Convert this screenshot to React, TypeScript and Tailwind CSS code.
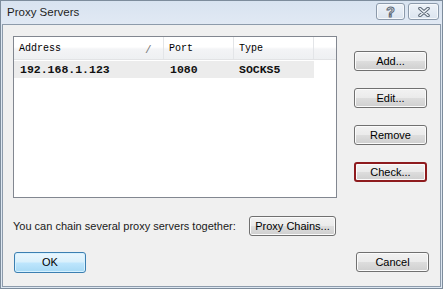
import React from 'react';

const sans = { fontFamily: '"Liberation Sans", Arial, sans-serif' };

function WinButton({ label, className = '' }: { label: string; className?: string }) {
  return (
    <button
      className={`h-[20px] w-[73px] rounded-[3px] border border-[#707070] bg-[linear-gradient(to_bottom,#f2f2f2_0%,#ebebeb_48%,#dddddd_52%,#cfcfcf_100%)] shadow-[inset_0_0_0_1px_#fbfbfb] text-[11px] text-black leading-none flex items-center justify-center ${className}`}
    >
      {label}
    </button>
  );
}

export default function App() {
  return (
    <div
      className="w-[443px] h-[289px] overflow-hidden bg-[#dde7f2] border border-[#7d8c9c] flex flex-col"
      style={sans}
    >
      {/* Title bar */}
      <div className="h-[23px] shrink-0 flex items-start bg-[linear-gradient(to_bottom,#d8e3f0,#e1e9f4)]">
        <span className="ml-[6px] mt-[6px] text-[11.5px] text-[#1e1e1e] leading-none">Proxy Servers</span>
        <div className="ml-auto mr-[3px] mt-[2px] flex gap-[3px]">
          <div className="w-[29px] h-[17px] rounded-[3px] border border-[#8c9aab] bg-[linear-gradient(to_bottom,#edf2f8,#dbe4ef)] shadow-[inset_0_0_0_1px_#f5f8fb] flex items-center justify-center">
            <span className="text-[14px] font-bold leading-none text-[#f3f5f8] [-webkit-text-stroke:1px_#5c6876]">?</span>
          </div>
          <div className="w-[31px] h-[17px] rounded-[3px] border border-[#8c9aab] bg-[linear-gradient(to_bottom,#edf2f8,#dbe4ef)] shadow-[inset_0_0_0_1px_#f5f8fb] flex items-center justify-center">
            <svg width="14" height="10" viewBox="0 0 14 10">
              <path d="M3 1.5 L11 8.5 M11 1.5 L3 8.5" stroke="#5c6876" strokeWidth="3.6" strokeLinecap="round" />
              <path d="M3 1.5 L11 8.5 M11 1.5 L3 8.5" stroke="#eef2f7" strokeWidth="1.6" strokeLinecap="round" />
            </svg>
          </div>
        </div>
      </div>

      {/* Client area */}
      <div className="flex-1 mx-[1px] mb-[1px] bg-[#f0f0f0] border border-[#8d9bab] pt-[11px] pl-[10px] pr-[11px] flex flex-col">
        <div className="flex">
          {/* List view */}
          <div className="w-[324px] h-[162px] border border-[#828790] bg-white flex flex-col">
            <div className="h-[23px] flex text-[10px] text-black border-b border-[#e2e3e5] bg-[linear-gradient(to_bottom,#ffffff_0%,#ffffff_45%,#f3f4f6_55%,#eef0f2_100%)]" style={{ fontFamily: '"Liberation Mono", "Courier New", monospace' }}>
              <div className="w-[150px] flex items-center pl-[5px] border-r border-[#e3e5e8] relative">
                Address
                <span className="absolute left-[131px] top-[5px] text-[#7a7a7a] text-[11px]">/</span>
              </div>
              <div className="w-[70px] flex items-center pl-[5px] border-r border-[#e3e5e8]">Port</div>
              <div className="w-[80px] flex items-center pl-[5px] border-r border-[#e3e5e8]">Type</div>
              <div className="flex-1" />
            </div>
            <div
              className="mt-[1px] w-[300px] h-[17px] flex items-center bg-[#ececec] text-[11.5px] font-bold text-[#111]"
              style={{ fontFamily: '"Liberation Mono", "Courier New", monospace' }}
            >
              <div className="w-[150px] pl-[6px]">192.168.1.123</div>
              <div className="w-[70px] pl-[6px]">1080</div>
              <div className="w-[80px] pl-[5px]">SOCKS5</div>
            </div>
          </div>

          {/* Side buttons */}
          <div className="ml-[17px] pt-[15px] flex flex-col gap-[17px]">
            <WinButton label="Add..." />
            <WinButton label="Edit..." />
            <WinButton label="Remove" />
            <WinButton label="Check..." className="!border-2 !border-[#8e1b1e]" />
          </div>
        </div>

        {/* Chain row */}
        <div className="mt-[18px] w-[323px] flex items-center justify-between">
          <span className="text-[11px] text-[#1a1a1a]">You can chain several proxy servers together:</span>
          <WinButton label="Proxy Chains..." className="!w-[87px]" />
        </div>

        {/* Bottom buttons */}
        <div className="mt-[16px] flex items-start justify-between">
          <button className="ml-[1px] h-[21px] w-[72px] rounded-[3px] border border-[#3c7fb1] bg-[linear-gradient(to_bottom,#eaf6fd_0%,#d9f0fc_48%,#bee6fd_52%,#a7d9f5_100%)] shadow-[inset_0_0_0_1px_#d6f1ff] text-[11px] text-black leading-none flex items-center justify-center">
            OK
          </button>
          <WinButton label="Cancel" />
        </div>
      </div>
    </div>
  );
}
